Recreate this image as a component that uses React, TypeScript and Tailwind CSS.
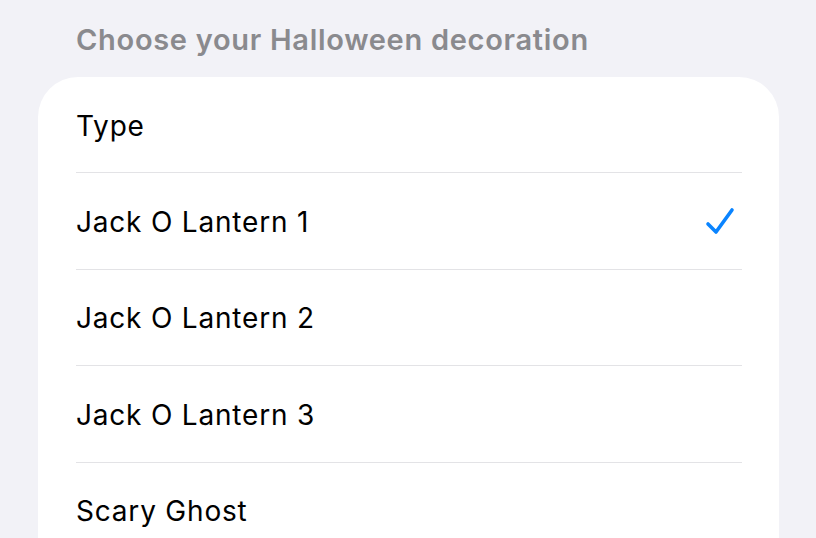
import React from "react";

const items = ["Jack O Lantern 1", "Jack O Lantern 2", "Jack O Lantern 3", "Scary Ghost"];

export default function App() {
  return (
    <div
      className="w-[816px] h-[538px] overflow-hidden bg-[#f2f2f7]"
      style={{ fontFamily: "Inter, 'Noto Sans', sans-serif" }}
    >
      <div className="pl-[76px] pt-[20px] h-[77px]">
        <div className="text-[29px] leading-[40px] font-semibold text-[#8a8a8e] tracking-[0.7px]">
          Choose your Halloween decoration
        </div>
      </div>
      <div className="ml-[38px] w-[741px] h-[600px] bg-white rounded-[40px] pl-[38px] pr-[37px]">
        <div className="h-[96px] flex items-center border-b border-[#e3e3e6]">
          <span className="text-[28px] text-black tracking-[0.8px] pt-[2px]">Type</span>
        </div>
        {items.map((t, i) => (
          <div
            key={t}
            className="h-[96.5px] flex items-center justify-between border-b border-[#e3e3e6]"
          >
            <span className="text-[28px] text-black tracking-[0.8px] pt-[2px]">{t}</span>
            {i === 0 && (
              <svg width="30" height="28" viewBox="0 0 30 28" className="mr-[7px]">
                <path
                  d="M3 17 L11 25 L27 3"
                  fill="none"
                  stroke="#0a84ff"
                  strokeWidth="3.6"
                  strokeLinecap="round"
                  strokeLinejoin="round"
                />
              </svg>
            )}
          </div>
        ))}
      </div>
    </div>
  );
}
